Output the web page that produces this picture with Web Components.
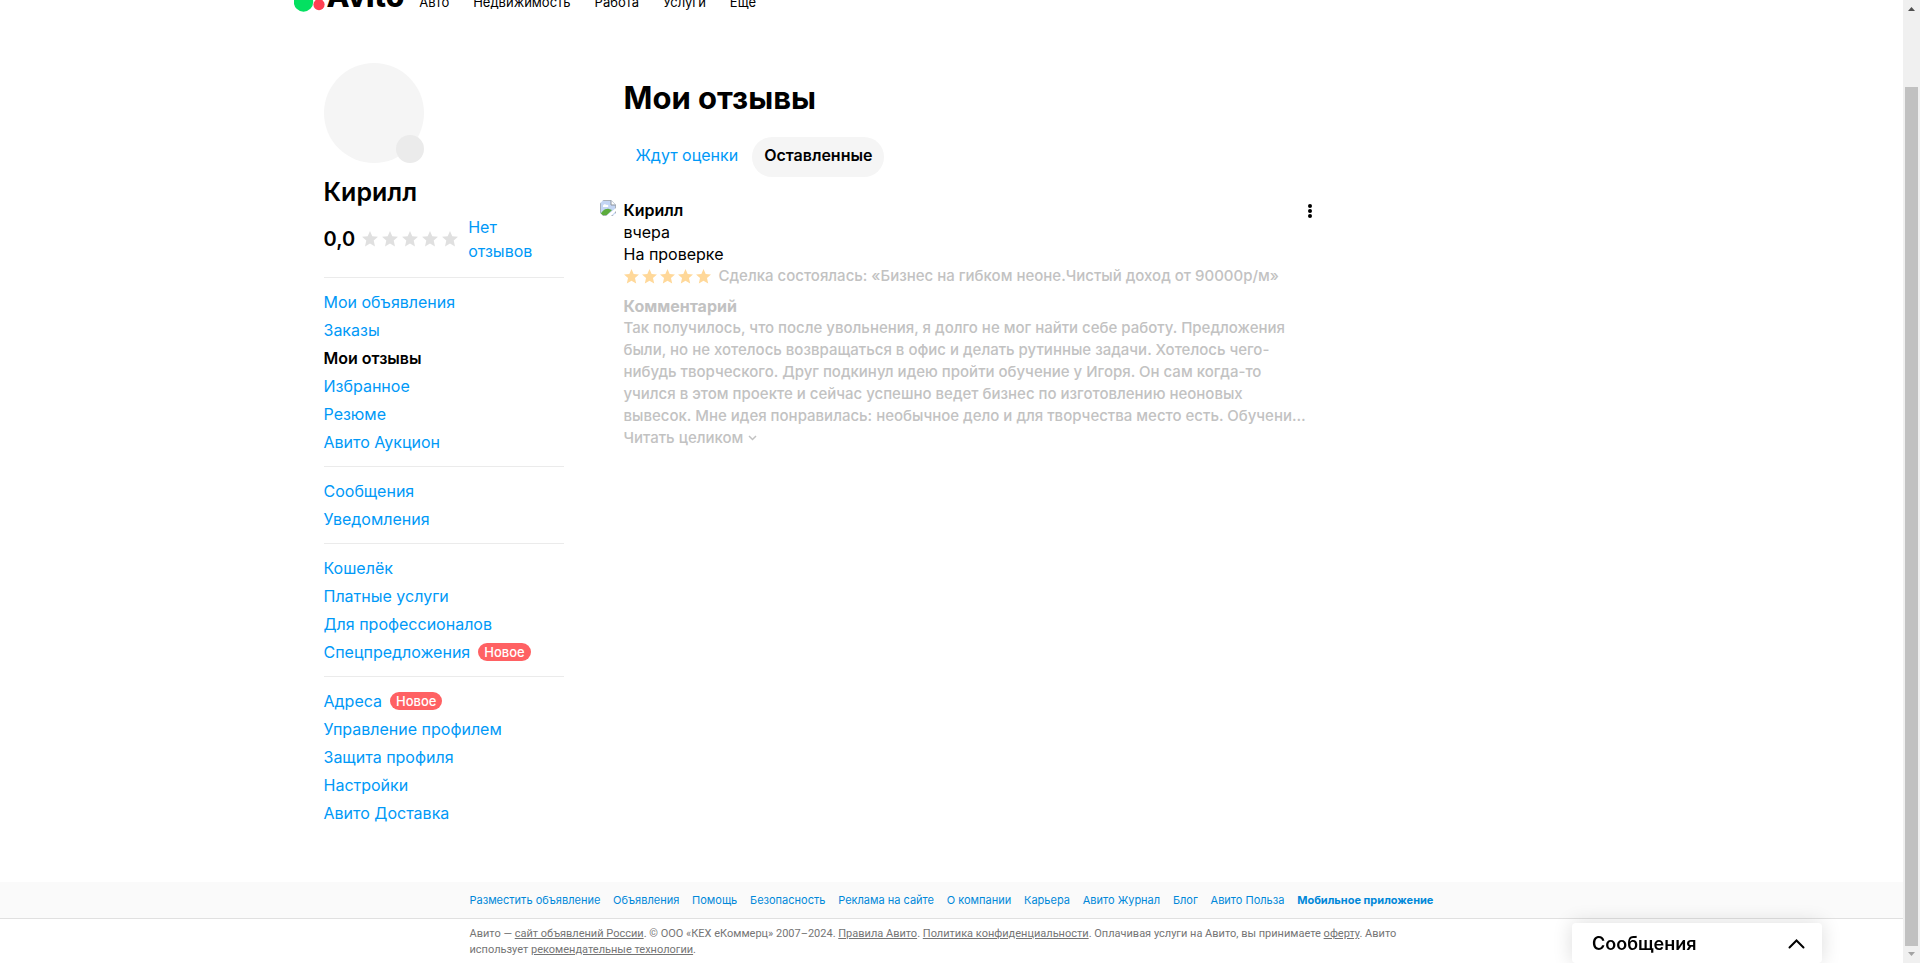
<!DOCTYPE html>
<html lang="ru">
<head>
<meta charset="utf-8">
<title>Мои отзывы</title>
<style>
    html, body {
        margin: 0;
        height: 100%;
        overflow: hidden;
    }
    body {
        display: grid;
        grid-template-columns: minmax(0, 1fr) 17px;
        font: 16px/24px Inter, "Liberation Sans", sans-serif;
        color: #000;
        background: #fff;
        --link: #0099f7;
    }
</style>
</head>
<body>

<template id="t-page">
    <style>
        :host { display: block; }
        .columns {
            display: grid;
            grid-template-columns: 240px minmax(0, 720px);
            column-gap: 36px;
            max-width: 1256px;
            margin: 0 auto;
            padding: 51px 30px 0;
        }
        slot[name=footer] { display: block; margin-top: 45px; }
    </style>
    <slot name="header"></slot>
    <div class="columns">
        <slot name="side"></slot>
        <slot name="main"></slot>
    </div>
    <slot name="footer"></slot>
</template>

<template id="t-header">
    <style>
        :host { display: block; height: 12px; overflow: hidden; }
        .bar {
            display: flex;
            align-items: flex-end;
            gap: 15px;
            height: 12px;
            max-width: 1316px;
            margin: 0 auto;
        }
        .logo { display: flex; align-items: flex-end; gap: 2px; color: #000; text-decoration: none; }
        .logo svg { display: block; }
        .logo b { font-size: 30px; line-height: 32px; height: 32px; font-weight: 800; }
        nav { display: flex; gap: 24px; }
        ::slotted(a) { font-size: 13px; line-height: 20px; color: #000; text-decoration: none; }
    </style>
    <div class="bar">
        <a class="logo" href="#">
            <svg width="31" height="32" viewBox="0 0 31 32">
                <circle cx="9.5" cy="22" r="9.7" fill="#04e061"/>
                <circle cx="25" cy="24.6" r="5.6" fill="#ff4053"/>
                <circle cx="22" cy="10" r="8" fill="#00aaff"/>
                <circle cx="8" cy="7" r="4" fill="#965eeb"/>
            </svg>
            <b>Avito</b>
        </a>
        <nav><slot></slot></nav>
    </div>
</template>

<template id="t-stars">
    <style>
        :host { display: inline-flex; gap: var(--gap, 4px); color: #e0e0e0; }
        svg { display: block; width: var(--size, 16px); height: var(--size, 16px); fill: currentColor; }
    </style>
</template>

<template id="t-profile">
    <style>
        :host { display: block; }
        .avatar { position: relative; width: 100px; height: 100px; border-radius: 50%; background: #f5f5f5; }
        .avatar i { position: absolute; right: 0; bottom: 0; width: 28px; height: 28px; border-radius: 50%; background: #ebebeb; }
        h2 { margin: 13px 0 0; font-size: 25px; line-height: 32px; font-weight: 600; }
        .rating { display: flex; align-items: center; gap: 7px; margin: 7px 0 14px; }
        .rating b { font-size: 20px; font-weight: 600; }
        .rating a { flex: 0 0 70px; margin-left: 3px; color: var(--link); text-decoration: none; }
    </style>
    <div class="avatar"><i></i></div>
    <h2><slot name="name"></slot></h2>
    <div class="rating">
        <b><slot name="score"></slot></b>
        <star-row></star-row>
        <a href="#"><slot name="reviews"></slot></a>
    </div>
    <slot></slot>
</template>

<template id="t-group">
    <style>
        :host { display: block; border-top: 1px solid #ebebeb; padding: 10px 0; }
    </style>
    <slot></slot>
</template>

<template id="t-item">
    <style>
        :host { display: flex; align-items: center; gap: 8px; height: 28px; }
        a { color: var(--link); text-decoration: none; }
        :host([active]) a { color: #000; font-weight: 600; }
        span {
            display: none;
            padding: 0 6px;
            border-radius: 9px;
            background: #ff6163;
            color: #fff;
            font-size: 13px;
            line-height: 18px;
            font-weight: 500;
        }
        :host([badge]) span { display: block; }
    </style>
    <a href="#"><slot></slot></a><span></span>
</template>

<template id="t-tabs">
    <style>
        :host { display: flex; gap: 2px; }
        ::slotted(button) {
            height: 40px;
            padding: 0 12px 4px;
            border: 0;
            border-radius: 20px;
            background: none;
            font: inherit;
            color: var(--link);
        }
        ::slotted(button[aria-selected=true]) { background: #f5f5f5; color: #000; font-weight: 600; }
    </style>
    <slot></slot>
</template>

<template id="t-review">
    <style>
        :host {
            display: grid;
            grid-template-columns: 16px minmax(0, 1fr) auto;
            column-gap: 8px;
            line-height: 22px;
        }
        .pic { margin-top: 1px; }
        svg { display: block; }
        .name { font-weight: 600; }
        button { align-self: start; width: 20px; height: 24px; padding: 0; border: 0; background: none; }
        button svg { margin: auto; }
        .faded { grid-column: 2 / 4; font-size: 15px; font-weight: 500; color: #c2c2c2; }
        .deal { display: flex; align-items: center; gap: 8px; white-space: nowrap; }
        star-row { --size: 15px; --gap: 3px; color: #ffd899; }
        h3 { margin: 8px 0 0; font-size: 16px; line-height: 22px; font-weight: 700; }
        p { margin: 0; }
        .more { display: flex; align-items: center; gap: 5px; color: inherit; text-decoration: none; }
    </style>
    <svg class="pic" width="16" height="16" viewBox="0 0 16 16">
        <clipPath id="round"><circle cx="8" cy="8" r="9"/></clipPath>
        <g clip-path="url(#round)">
            <path d="M0 0h11l5 5v11H0z" fill="#c3d5f4"/>
            <path d="M3 6c0-2 3-2 3-1 2-1 3 1 2 2H3z" fill="#fff"/>
            <path d="M0 16c1-4 5-8 9-7l3 1-6 6z" fill="#5cab3c"/>
            <path d="M.5.5H11L15.500 5v10.500H.5z" fill="none" stroke="#a9b0b8"/>
            <path d="M11 .5V5h4.500" fill="#fff" stroke="#8d949c"/>
            <path d="M6 16l10-8v3l-5 5z" fill="#fff"/>
        </g>
    </svg>
    <div>
        <div class="name"><slot name="name"></slot></div>
        <div><slot name="date"></slot></div>
        <div><slot name="status"></slot></div>
    </div>
    <button aria-label="Действия">
        <svg width="4" height="14" viewBox="0 0 4 14">
            <circle cx="2" cy="2" r="2"/><circle cx="2" cy="7" r="2"/><circle cx="2" cy="12" r="2"/>
        </svg>
    </button>
    <div class="faded">
        <div class="deal"><star-row></star-row><slot name="deal"></slot></div>
        <h3>Комментарий</h3>
        <p><slot></slot></p>
        <a class="more" href="#">
            <slot name="more"></slot>
            <svg width="9" height="6" viewBox="0 0 9 6" fill="none" stroke="currentColor" stroke-width="1.500"><path d="M1 1l3.500 3.500L8 1"/></svg>
        </a>
    </div>
</template>

<template id="t-footer">
    <style>
        :host { display: block; font-size: 11px; line-height: 16px; }
        .links { background: #fafafa; border-bottom: 1px solid #e0e0e0; }
        nav, p { max-width: 964px; margin: 0 auto; }
        nav { display: flex; justify-content: space-between; padding: 10px 0; white-space: nowrap; }
        p { padding-top: 7px; font-family: Roboto, Inter, sans-serif; color: #757575; }
        nav ::slotted(a) { color: #0088d9; text-decoration: none; }
        nav ::slotted(a.app) { font-weight: 700; }
    </style>
    <div class="links"><nav><slot></slot></nav></div>
    <p><slot name="legal"></slot></p>
</template>

<template id="t-messenger">
    <style>
        :host {
            position: fixed;
            right: 98px;
            bottom: 0;
            width: 250px;
            border-radius: 4px;
            background: #fff;
            box-shadow: 0 0 20px rgba(0, 0, 0, .14);
        }
        button {
            display: flex;
            align-items: center;
            justify-content: space-between;
            width: 100%;
            height: 40px;
            padding: 2px 17px 0 20px;
            border: 0;
            background: none;
            font: inherit;
            font-size: 18px;
            font-weight: 600;
            color: #000;
        }
    </style>
    <button>
        <slot></slot>
        <svg width="17" height="10" viewBox="0 0 17 10" fill="none" stroke="#000" stroke-width="2" stroke-linecap="round"><path d="M1.500 8.500l7-7 7 7"/></svg>
    </button>
</template>

<template id="t-scroll">
    <style>
        :host { display: flex; flex-direction: column; height: 100vh; background: #f0f0f0; }
        svg { display: block; flex: none; width: 17px; height: 17px; }
        .track { flex: 1; display: flex; padding: 70px 2px 0; }
        .thumb { flex: 1; background: #c1c1c1; }
    </style>
    <svg viewBox="0 0 17 17"><path d="M5 11l3.500-4 3.500 4z" fill="#505050"/></svg>
    <div class="track"><div class="thumb"></div></div>
    <svg viewBox="0 0 17 17"><path d="M5 6l3.500 4L12 6z" fill="#a3a3a3"/></svg>
</template>

<template id="t-main">
    <style>
        :host { display: block; }
        h1 { margin: 15px 0 0 24px; font-size: 31px; line-height: 40px; font-weight: 700; }
        slot[name=tabs] { display: block; margin: 19px 0 22px 24px; }
    </style>
    <h1><slot name="title"></slot></h1>
    <slot name="tabs"></slot>
    <slot></slot>
</template>

<account-page>
    <site-header slot="header">
        <a href="#">Авто</a>
        <a href="#">Недвижимость</a>
        <a href="#">Работа</a>
        <a href="#">Услуги</a>
        <a href="#">Ещё</a>
    </site-header>

    <profile-side slot="side">
        <span slot="name">Кирилл</span>
        <span slot="score">0,0</span>
        <span slot="reviews">Нет отзывов</span>
        <menu-group>
            <menu-item>Мои объявления</menu-item>
            <menu-item>Заказы</menu-item>
            <menu-item active>Мои отзывы</menu-item>
            <menu-item>Избранное</menu-item>
            <menu-item>Резюме</menu-item>
            <menu-item>Авито Аукцион</menu-item>
        </menu-group>
        <menu-group>
            <menu-item>Сообщения</menu-item>
            <menu-item>Уведомления</menu-item>
        </menu-group>
        <menu-group>
            <menu-item>Кошелёк</menu-item>
            <menu-item>Платные услуги</menu-item>
            <menu-item>Для профессионалов</menu-item>
            <menu-item badge="Новое">Спецпредложения</menu-item>
        </menu-group>
        <menu-group>
            <menu-item badge="Новое">Адреса</menu-item>
            <menu-item>Управление профилем</menu-item>
            <menu-item>Защита профиля</menu-item>
            <menu-item>Настройки</menu-item>
            <menu-item>Авито Доставка</menu-item>
        </menu-group>
    </profile-side>

    <reviews-main slot="main">
        <span slot="title">Мои отзывы</span>
        <tab-row slot="tabs" role="tablist">
            <button role="tab" aria-selected="false">Ждут оценки</button>
            <button role="tab" aria-selected="true">Оставленные</button>
        </tab-row>
        <review-card>
            <span slot="name">Кирилл</span>
            <span slot="date">вчера</span>
            <span slot="status">На проверке</span>
            <span slot="deal">Сделка состоялась: «Бизнес на гибком неоне.Чистый доход от 90000р/м»</span>
            Так получилось, что после увольнения, я долго не мог найти себе работу. Предложения<br>
            были, но не хотелось возвращаться в офис и делать рутинные задачи. Хотелось чего-<br>
            нибудь творческого. Друг подкинул идею пройти обучение у Игоря. Он сам когда-то<br>
            учился в этом проекте и сейчас успешно ведет бизнес по изготовлению неоновых<br>
            вывесок. Мне идея понравилась: необычное дело и для творчества место есть. Обучени…
            <span slot="more">Читать целиком</span>
        </review-card>
    </reviews-main>

    <site-footer slot="footer">
        <a href="#">Разместить объявление</a>
        <a href="#">Объявления</a>
        <a href="#">Помощь</a>
        <a href="#">Безопасность</a>
        <a href="#">Реклама на сайте</a>
        <a href="#">О компании</a>
        <a href="#">Карьера</a>
        <a href="#">Авито Журнал</a>
        <a href="#">Блог</a>
        <a href="#">Авито Польза</a>
        <a href="#" class="app">Мобильное приложение</a>
        <span slot="legal">Авито — <a href="#" style="color: inherit">сайт объявлений России</a>. © ООО «КЕХ еКоммерц» 2007–2024. <a href="#" style="color: inherit">Правила Авито</a>. <a href="#" style="color: inherit">Политика конфиденциальности</a>. Оплачивая услуги на Авито, вы принимаете <a href="#" style="color: inherit">оферту</a>. Авито использует <a href="#" style="color: inherit">рекомендательные технологии</a>.</span>
    </site-footer>
</account-page>
<scroll-rail></scroll-rail>
<messenger-bar>Сообщения</messenger-bar>

<script>
    class BaseElement extends HTMLElement {
        constructor() {
            super();
            const template = document.getElementById(this.constructor.template);
            this.attachShadow({mode: 'open'});
            this.shadowRoot.appendChild(template.content.cloneNode(true));
        }
    }

    class StarRow extends BaseElement {
        static template = 't-stars';
        constructor() {
            super();
            const star = '<svg viewBox="0 0 16 16"><path d="M8 0l2.300 5.300 5.700.5-4.300 3.800 1.300 5.900L8 12.400 3 15.500l1.300-5.900L0 5.800l5.700-.5z"/></svg>';
            this.shadowRoot.innerHTML += star.repeat(5);
        }
    }

    class MenuItem extends BaseElement {
        static template = 't-item';
        static get observedAttributes() { return ['badge']; }
        attributeChangedCallback(name, oldValue, newValue) {
            this.shadowRoot.querySelector('span').textContent = newValue;
        }
    }

    customElements.define('star-row', StarRow);
    customElements.define('menu-item', MenuItem);

    const simple = {
        'account-page': 't-page',
        'site-header': 't-header',
        'profile-side': 't-profile',
        'menu-group': 't-group',
        'reviews-main': 't-main',
        'tab-row': 't-tabs',
        'review-card': 't-review',
        'site-footer': 't-footer',
        'messenger-bar': 't-messenger',
        'scroll-rail': 't-scroll'
    };
    for (const tag in simple) {
        customElements.define(tag, class extends BaseElement {
            static template = simple[tag];
        });
    }
</script>
</body>
</html>
